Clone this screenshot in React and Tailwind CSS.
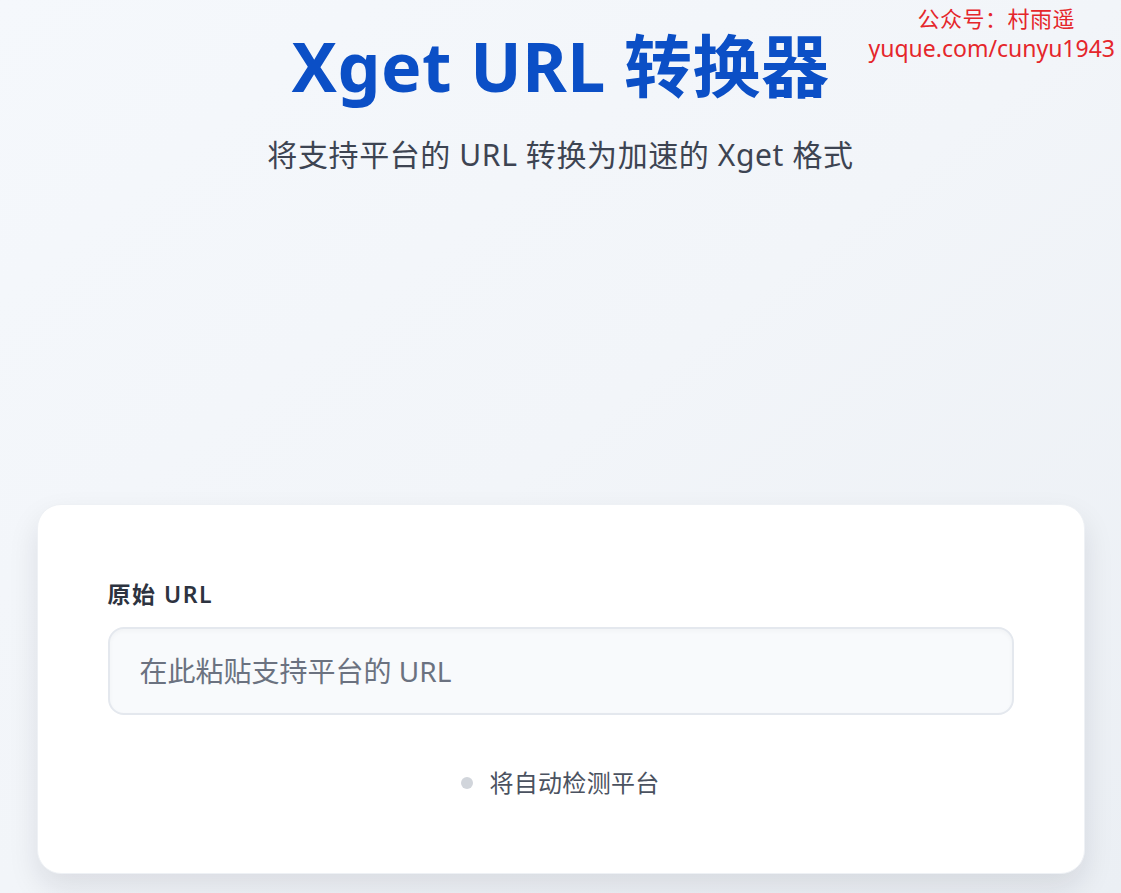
import React from "react";

const font = { fontFamily: '"Noto Sans", "Noto Sans CJK SC", sans-serif' };

export default function App() {
  return (
    <div
      className="relative min-h-[893px] w-full overflow-hidden bg-gradient-to-br from-[#f5f8fc] via-[#f2f5f9] to-[#ebeff4]"
      style={font}
    >
      {/* watermark */}
      <div className="absolute right-[6px] top-[3px] flex flex-col items-end text-[#e5262b]">
        <div className="pr-[40px] text-[22px] leading-[30px] tracking-[0.5px]">公众号：村雨遥</div>
        <div className="text-[23px] leading-[30px]">yuque.com/cunyu1943</div>
      </div>

      <div className="flex flex-col items-center pt-[22px]">
        <h1 className="text-[68px] font-bold leading-[88px] tracking-[0.5px] text-[#0b4fc6]">
          Xget URL 转换器
        </h1>
        <p className="mt-[24px] text-[30px] leading-[42px] tracking-[0.6px] text-[#3d4452]">
          将支持平台的 URL 转换为加速的 Xget 格式
        </p>
      </div>

      <div className="mx-auto mt-[328px] w-[1048px] rounded-[24px] border border-[#eef1f5] bg-white px-[70px] pb-[74px] pt-[74px] shadow-[0_14px_30px_rgba(15,23,42,0.10)]">
        <label className="block text-[23px] font-semibold leading-[30px] tracking-[1.5px] text-[#2d3340]">
          原始 URL
        </label>
        <div className="mt-[18px] flex h-[88px] items-center rounded-[16px] border-2 border-[#e4e8ee] bg-[#f8fafc] px-[30px] shadow-[inset_0_2px_4px_rgba(0,0,0,0.03)]">
          <input
            className="w-full bg-transparent text-[28px] text-[#6b7280] outline-none placeholder:text-[#6b7280]"
            placeholder="在此粘贴支持平台的 URL"
            style={font}
          />
        </div>
        <div className="mt-[52px] flex items-center justify-center gap-[16px]">
          <span className="h-[12px] w-[12px] rounded-full bg-[#d1d5db]" />
          <span className="text-[24px] leading-[32px] tracking-[0.3px] text-[#4b5260]">将自动检测平台</span>
        </div>
      </div>
    </div>
  );
}
